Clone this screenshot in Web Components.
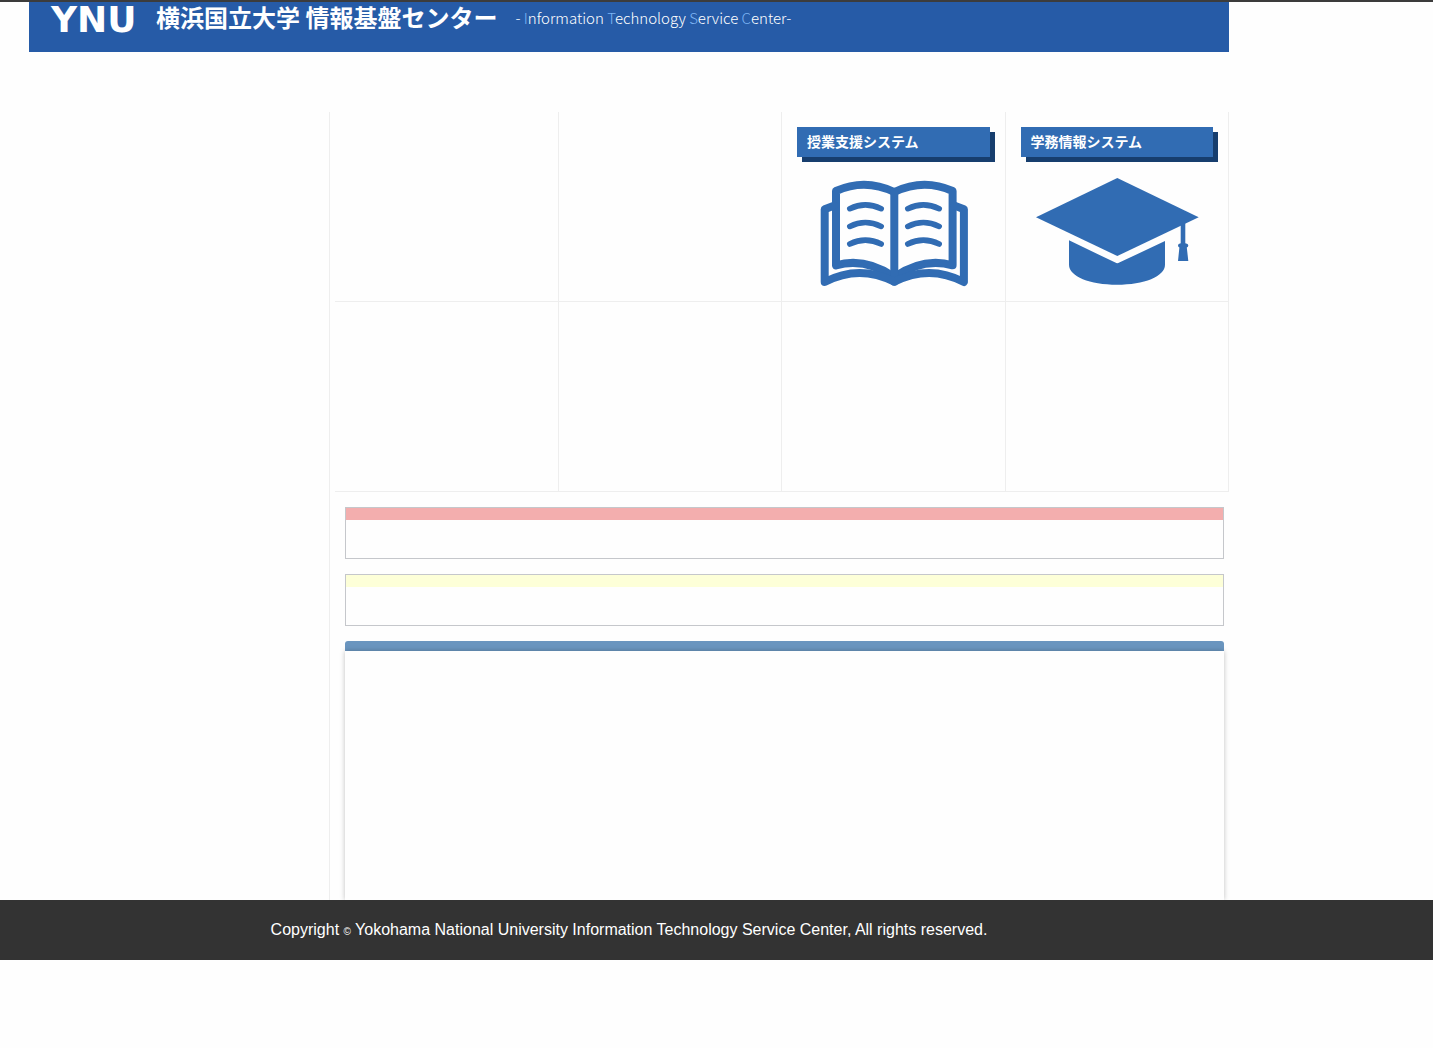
<!DOCTYPE html>
<html lang="ja">
<head>
<meta charset="utf-8">
<title>横浜国立大学 情報基盤センター</title>
<style>
  body {
    margin: 0;
    background: #fefefe;
    color: #333;
    font-family: "Liberation Sans", "Noto Sans CJK JP", sans-serif;
  }
</style>
</head>
<body>
<portal-page></portal-page>

<script>
const define = (name, html) => {
  const template = document.createElement('template');
  template.innerHTML = html;
  customElements.define(name, class extends HTMLElement {
    constructor() {
      super();
      this.attachShadow({ mode: 'open' }).append(template.content.cloneNode(true));
    }
  });
};

define('site-header', `
  <style>
    :host { display: block; }
    header {
      display: flex;
      align-items: flex-start;
      height: 50px;
      padding-left: 22px;
      box-sizing: border-box;
      background: #265ba7;
      color: #fff;
      font-family: "Noto Sans CJK JP", sans-serif;
      white-space: nowrap;
    }
    a { display: flex; color: inherit; text-decoration: none; }
    .mark { width: 105px; font: bold 36px/36px "DejaVu Sans", sans-serif; }
    h1 { margin: 0; font-size: 24px; line-height: 30px; font-weight: 700; }
    p { margin: 0 0 0 18px; font-size: 15px; line-height: 32px; font-weight: 300; }
    b { font-weight: 300; color: #7db4f4; }
  </style>
  <header>
    <a href="#"><span class="mark">YNU</span><h1>横浜国立大学 情報基盤センター</h1></a>
    <p>- <b>I</b>nformation <b>T</b>echnology <b>S</b>ervice <b>C</b>enter-</p>
  </header>
`);

define('system-tile', `
  <style>
    :host {
      display: block;
      height: 190px;
      box-sizing: border-box;
      padding: 15px;
      border-right: 1px solid #eee;
      border-bottom: 1px solid #eee;
    }
    a { display: flex; flex-direction: column; gap: 20px; color: #fff; text-decoration: none; }
    ::slotted(h2) {
      margin: 0;
      padding: 0 10px 2px;
      background: #316cb3;
      box-shadow: 5px 5px #173e6e;
      font: bold 14px/28px "Noto Sans CJK JP", sans-serif;
    }
    ::slotted(*) { flex: none; }
  </style>
  <a href="#"><slot></slot></a>
`);

define('book-icon', `
  <style>
    :host { display: block; }
    svg { display: block; margin: 0 auto; }
  </style>
  <svg width="165" height="110" viewBox="0 0 165 110" fill="none" stroke="#316cb3" stroke-width="8" stroke-linecap="round" stroke-linejoin="round" aria-hidden="true">
    <path d="M25 14Q54 1 83.3 15Q112.6 1 141.6 14V88.3Q112.6 80 83.3 100Q54 80 25 88.3Z"/>
    <path d="M83.3 15V104.7"/>
    <path d="M23 28.6L13.7 32.3V105Q48 87 83.3 104.7Q118.6 87 152.9 105V32.3L143.6 28.6"/>
    <path stroke-width="5.6" d="M38.8 31.7Q54.3 24 70.2 31.7M38.8 49.4Q54.3 41.7 70.2 49.4M38.8 67Q54.3 59.3 70.2 67M96.8 31.7Q112.3 24 128.2 31.7M96.8 49.4Q112.3 41.7 128.2 49.4M96.8 67Q112.3 59.3 128.2 67"/>
  </svg>
`);

define('cap-icon', `
  <style>
    :host { display: block; }
    svg { display: block; margin: 0 auto; }
  </style>
  <svg width="165" height="110" viewBox="-1 0 165 110" fill="#316cb3" aria-hidden="true">
    <path d="M82.3 1L163.7 40.3L82.3 79L1 40.3Z"/>
    <path d="M34 63.3L80.3 85.6Q82.3 86.8 84.3 85.6L130 64V87.7C130 99.5 109 107.7 82 107.7S34 99.5 34 87.7Z"/>
    <path d="M145.7 46H150.3V66.2Q153.3 66.6 153.3 68.3Q153.3 70 151.8 70.4L153.3 84H143L144.4 70.4Q143 70 143 68.3Q143 66.6 145.7 66.2Z"/>
  </svg>
`);

define('notice-box', `
  <style>
    :host { display: block; border: 1px solid #c5c7cb; }
    .bar { height: 12px; background: var(--bar); }
    .body { min-height: 38px; }
  </style>
  <div class="bar"></div><div class="body"><slot></slot></div>
`);

define('news-panel', `
  <style>
    :host { display: flex; flex-direction: column; }
    .bar { height: 10px; background: #6a95bf; border-radius: 3px 3px 0 0; }
    .body { flex: 1; background: #fefefe; box-shadow: 0 0 5px rgba(0, 0, 0, .25); }
  </style>
  <div class="bar"></div><div class="body"><slot></slot></div>
`);

define('site-footer', `
  <style>
    :host { display: block; position: relative; background: #333; color: #fff; }
    p {
      max-width: 1200px;
      margin: 0 0 0 29px;
      text-align: center;
      font-size: 16px;
      line-height: 60px;
    }
    ::slotted(small) { font-size: 10px; line-height: 1; }
  </style>
  <footer><p><slot></slot></p></footer>
`);

define('portal-page', `
  <style>
    :host { display: block; border-top: 2px solid #3c3c3c; }
    .wrap { max-width: 1200px; margin-left: 29px; }
    .columns { display: flex; }
    aside { flex: none; width: 300px; }
    main {
      flex: 1;
      display: flex;
      flex-direction: column;
      min-height: 848px;
      box-sizing: border-box;
      padding-top: 60px;
    }
    .content {
      flex: 1;
      display: flex;
      flex-direction: column;
      border-left: 1px solid #eee;
    }
    .tiles { display: grid; grid-template-columns: repeat(4, 1fr); margin-left: 5px; }
    .notices {
      flex: 1;
      display: flex;
      flex-direction: column;
      gap: 15px;
      padding: 15px 5px 0 15px;
    }
    .alert { --bar: #f3aeae; }
    .info { --bar: #fdffd8; }
    news-panel { flex: 1; }
  </style>
  <div class="wrap">
    <site-header></site-header>
    <div class="columns">
      <aside></aside>
      <main>
        <div class="content">
          <div class="tiles">
            <system-tile></system-tile>
            <system-tile></system-tile>
            <system-tile><h2>授業支援システム</h2><book-icon></book-icon></system-tile>
            <system-tile><h2>学務情報システム</h2><cap-icon></cap-icon></system-tile>
            <system-tile></system-tile>
            <system-tile></system-tile>
            <system-tile></system-tile>
            <system-tile></system-tile>
          </div>
          <div class="notices">
            <notice-box class="alert"></notice-box>
            <notice-box class="info"></notice-box>
            <news-panel></news-panel>
          </div>
        </div>
      </main>
    </div>
  </div>
  <site-footer>Copyright <small>©</small> Yokohama National University Information Technology Service Center, All rights reserved.</site-footer>
`);
</script>
</body>
</html>
